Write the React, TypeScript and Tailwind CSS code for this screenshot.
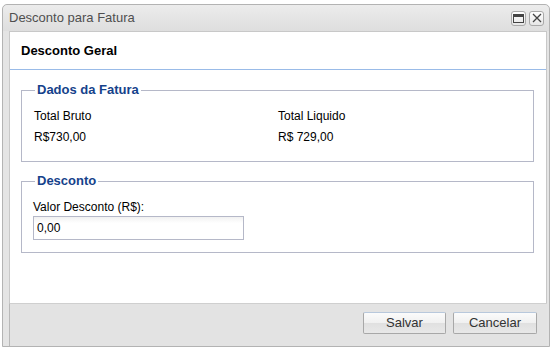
import React from "react";

const font = { fontFamily: '"Liberation Sans", Arial, sans-serif' };

function TitleBtn({ kind }: { kind: "max" | "close" }) {
  return (
    <div className="w-[15px] h-[15px] rounded-[3px] border border-[#a9a9a9] bg-gradient-to-b from-[#ffffff] to-[#e6e6e6] flex items-center justify-center">
      {kind === "max" ? (
        <svg width="11" height="9" viewBox="0 0 11 9">
          <rect x="0.5" y="0.5" width="10" height="8" fill="none" stroke="#444" />
          <rect x="0.5" y="0.5" width="10" height="2.5" fill="#444" />
        </svg>
      ) : (
        <svg width="10" height="10" viewBox="0 0 10 10">
          <path d="M1 1 L9 9 M9 1 L1 9" stroke="#444" strokeWidth="1.3" />
        </svg>
      )}
    </div>
  );
}

function Btn({ label, w }: { label: string; w: string }) {
  return (
    <button
      className={`${w} h-[22px] rounded-[2px] border border-[#a8a8a8] border-t-[#b8c8dc] text-[13px] text-[#333] bg-[linear-gradient(#fbfbfb_0%,#f0f0f0_50%,#e0e0e0_51%,#e8e8e8_100%)] flex items-center justify-center`}
      style={font}
    >
      {label}
    </button>
  );
}

export default function App() {
  return (
    <div className="w-[553px] h-[349px] bg-white pt-[4px] pl-[2px] pr-[3px] pb-[2px]" style={font}>
      <div className="h-full border border-[#b3b3b3] rounded-t-[5px] bg-[#e4e4e4] flex flex-col">
        <div className="h-[26px] flex items-center pl-[6px] pr-[5px] bg-gradient-to-b from-[#ececec] to-[#dedede] rounded-t-[5px]">
          <span className="text-[13px] text-[#4f4f4f] flex-1">Desconto para Fatura</span>
          <div className="flex gap-[3px]">
            <TitleBtn kind="max" />
            <TitleBtn kind="close" />
          </div>
        </div>
        <div className="flex-1 flex flex-col pl-[6px] pr-[2px]">
          <div className="h-[272px] bg-white border border-b-0 border-[#c8c8c8] flex flex-col">
            <div className="h-[38px] flex items-center pl-[11px] border-b border-[#99bbe8]">
              <span className="text-[13px] font-bold text-black">Desconto Geral</span>
            </div>
            <fieldset className="mt-[12px] ml-[11px] mr-[12px] border border-[#b5b8c8] pl-[12px] pr-[12px] pt-[10px] pb-[16px]">
              <legend className="ml-[1px] px-[2px] text-[13px] leading-[16px] font-bold text-[#15428b]">Dados da Fatura</legend>
              <div className="grid grid-cols-[244px_1fr] text-[12px] leading-[16px] text-black gap-y-[5px]">
                <span>Total Bruto</span>
                <span>Total Liquido</span>
                <span>R$730,00</span>
                <span>R$ 729,00</span>
              </div>
            </fieldset>
            <fieldset className="mt-[11px] ml-[11px] mr-[12px] border border-[#b5b8c8] pl-[11px] pr-[12px] pt-[10px] pb-[12px]">
              <legend className="ml-[2px] px-[2px] text-[13px] leading-[16px] font-bold text-[#15428b]">Desconto</legend>
              <div className="text-[12px] leading-[16px] text-black">Valor Desconto (R$):</div>
              <div className="mt-[1px] w-[211px] h-[24px] border border-[#b5b8c8] bg-[linear-gradient(#f1f1f1,#ffffff_6px)] flex items-center pl-[3px] text-[12px] text-black">
                0,00
              </div>
            </fieldset>
          </div>
          <div className="flex-1 border-t border-l border-[#cfcfcf] border-l-[#b8b8b8] bg-[#e3e3e3] flex justify-end items-start gap-[7px] pt-[8px] pr-[10px]">
            <Btn label="Salvar" w="w-[83px]" />
            <Btn label="Cancelar" w="w-[84px]" />
          </div>
        </div>
      </div>
    </div>
  );
}
